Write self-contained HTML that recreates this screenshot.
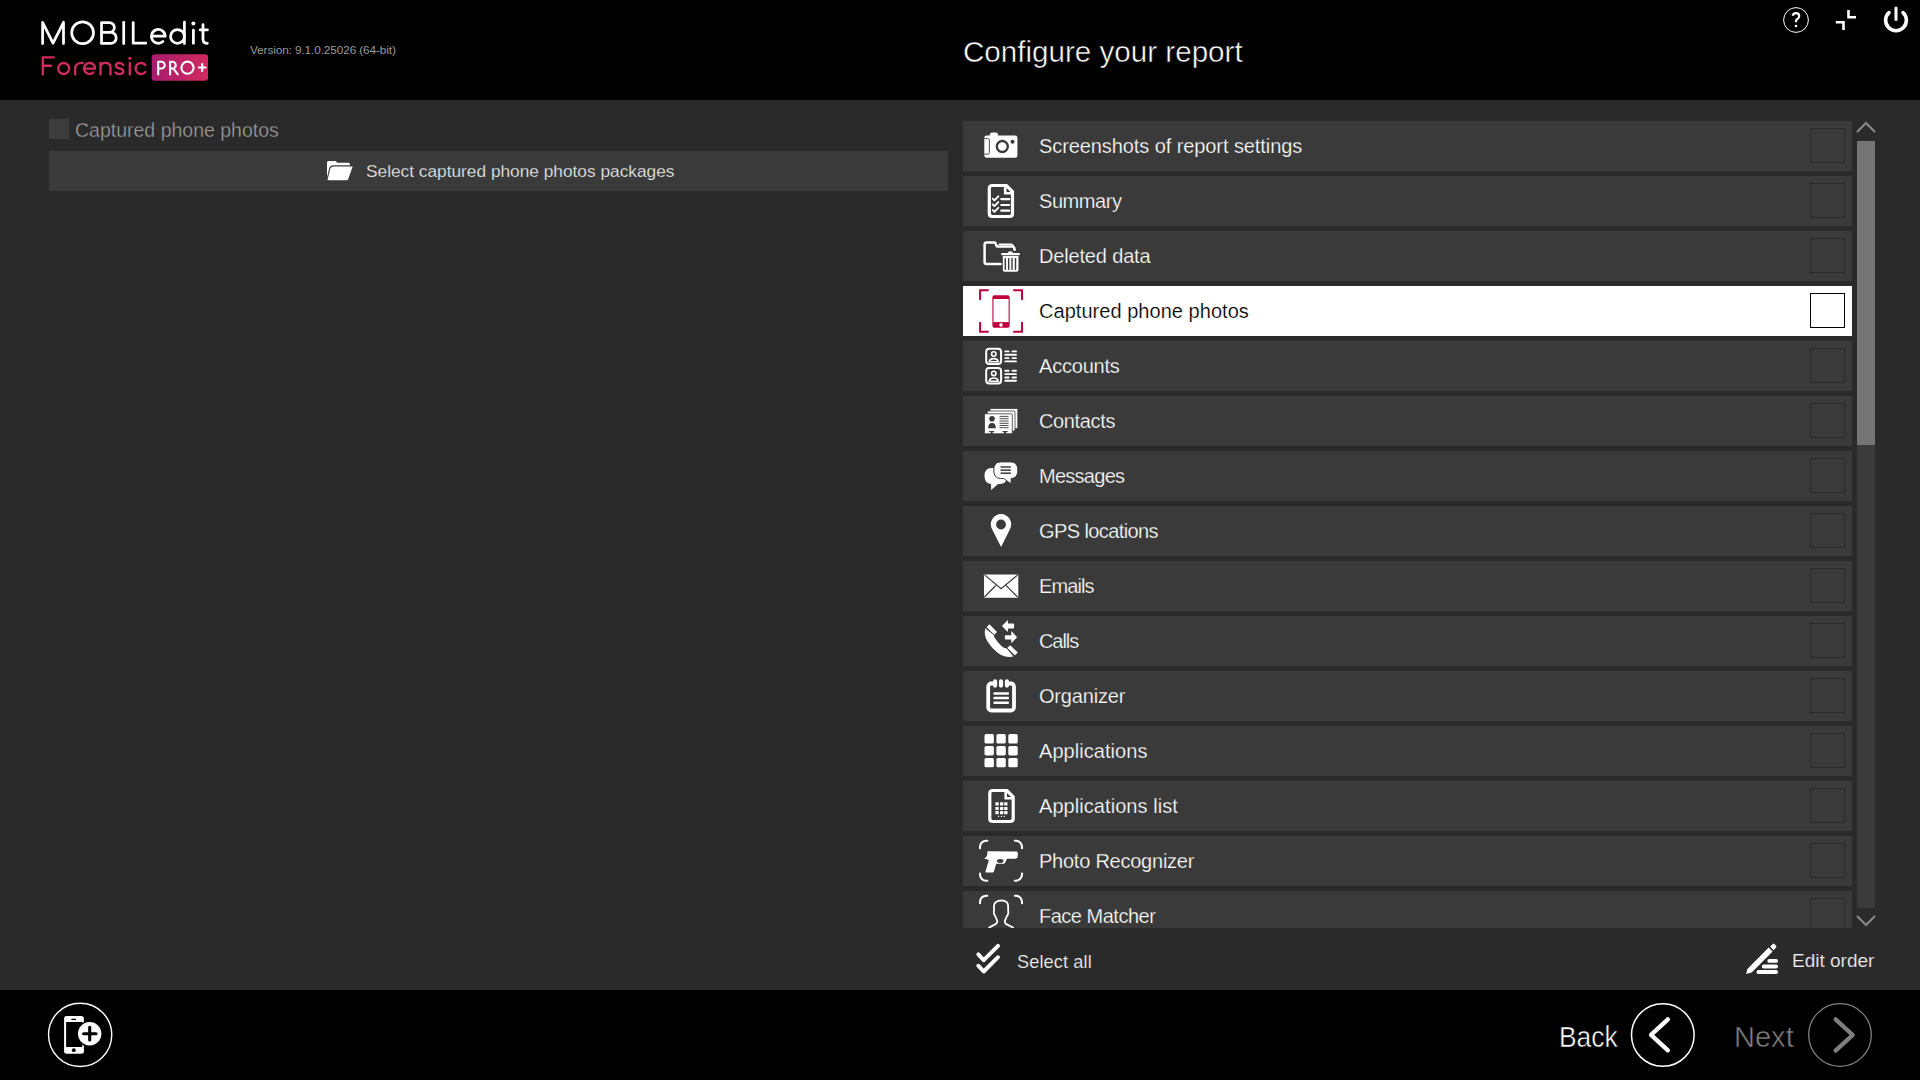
<!DOCTYPE html>
<html><head><meta charset="utf-8">
<style>
*{margin:0;padding:0;box-sizing:border-box}
html,body{width:1920px;height:1080px;overflow:hidden;background:#2a2a2a;font-family:"Liberation Sans",sans-serif;color:#fff}
.abs{position:absolute}
svg{position:absolute;overflow:visible}
#hdr{position:absolute;left:0;top:0;width:1920px;height:100px;background:#000}
#ftr{position:absolute;left:0;top:990px;width:1920px;height:90px;background:#000}
.t{position:absolute;white-space:nowrap;line-height:1}
.row{position:absolute;left:0;width:889px;height:50px;background:#3a3a3a}
.row .lbl{position:absolute;left:76px;top:15px;font-size:20px;line-height:1;color:#fff;white-space:nowrap;letter-spacing:-0.12px;-webkit-text-stroke:0.25px #3a3a3a}
.row .cb{position:absolute;left:847px;top:7px;width:35px;height:35px;border:1px solid #2a2a2a}
.row.sel{background:#fff}
.row.sel .lbl{color:#000;-webkit-text-stroke:0.2px #fff}
.row.sel .cb{border:1px solid #000}
.row svg{left:12px;top:0}
#list{position:absolute;left:963px;top:121px;width:889px;height:807px;overflow:hidden}
</style></head><body>
<div id="hdr"></div>
<div id="ftr"></div>

<!-- logo -->
<svg style="left:0;top:0" width="230" height="100" viewBox="0 0 230 100">
<defs><linearGradient id="bg" x1="0" x2="1" y1="0" y2="0"><stop offset="0" stop-color="#a81c70"/><stop offset="1" stop-color="#d02a5e"/></linearGradient></defs>
<g fill="none" stroke="#fff" stroke-width="2.75" stroke-linecap="round" stroke-linejoin="round">
<path d="M42.6 43.6 V22.3 L53 43.2 L63.5 22.3 V43.6"/>
<circle cx="82.6" cy="32.75" r="10.9"/>
<path d="M101.5 43.4 V22.5 H109.4 A4.95 4.95 0 0 1 109.4 32.4 H101.5 M109.4 32.4 H110.7 A5.5 5.5 0 0 1 110.7 43.4 H101.5"/>
<path d="M123.7 22.3 V43.5"/>
<path d="M133.2 22.5 V43.2 H145.8"/>
<path d="M151.6 36.2 H165.2 A6.9 6.9 0 1 0 162.9 41.5"/>
<circle cx="177.5" cy="36.4" r="6.9"/>
<path d="M184.4 22.2 V43.5"/>
<path d="M193.4 30.2 V43.3"/>
<path d="M203 24.5 V39.2 Q203 43.3 207.3 43.3 M200.1 29.8 H207.5"/>
</g>
<circle cx="193.4" cy="23.4" r="2" fill="#fff"/>
<g fill="none" stroke="#d02a63" stroke-width="2.35" stroke-linecap="round" stroke-linejoin="round">
<path d="M42.8 74.4 V57.4 H53.7 M42.8 65.7 H51"/>
<circle cx="63.65" cy="68.5" r="5.5"/>
<path d="M75.2 74.4 V68.5 Q75.2 62.9 82.6 62.9"/>
<path d="M84.05 68.6 H95.05 A5.5 5.5 0 1 0 93.4 72.4"/>
<path d="M100.5 74.4 V62.9 M100.5 67.6 Q100.5 62.9 105.5 62.9 Q110.5 62.9 110.5 67.6 V74.4"/>
<path d="M123.2 65 Q122 63 119.4 63 Q116 63 116 65.6 Q116 67.9 119.5 68.4 Q123.3 69 123.3 71.6 Q123.3 74.1 119.5 74.1 Q116.3 74.1 115.3 72.4"/>
<path d="M129.8 62.9 V74.4"/>
<path d="M145.4 65.1 A5.5 5.5 0 1 0 145.4 71.9"/>
</g>
<circle cx="129.9" cy="58.3" r="1.6" fill="#d02a63"/>
<rect x="151.7" y="54.3" width="56.3" height="26.5" rx="2.8" fill="url(#bg)"/>
<g fill="none" stroke="#fff" stroke-width="2.1" stroke-linecap="round" stroke-linejoin="round">
<path d="M158.2 74.4 V61.8 H161.4 A3.35 3.35 0 0 1 161.4 68.5 H158.2"/>
<path d="M170.1 74.4 V61.8 H172.4 A3.35 3.35 0 0 1 172.4 68.5 H170.1 M173.6 68.8 L177.8 74.4"/>
<circle cx="187.5" cy="67.7" r="6.1"/>
<path d="M198.9 67.5 H205.4 M202.15 64.1 V71" stroke-width="2.2"/>
</g>
</svg>
<div class="t" style="left:250px;top:45px;font-size:11.8px;color:#9a9a9a;letter-spacing:-0.105px">Version: 9.1.0.25026 (64-bit)</div>

<div class="t" style="left:963px;top:36.5px;font-size:29.6px;color:#fff;-webkit-text-stroke:0.5px #000">Configure your report</div>

<!-- header icons -->
<svg style="left:1770px;top:0" width="150" height="45" viewBox="1770 0 150 45">
<circle cx="1796" cy="20" r="12.4" fill="none" stroke="#fff" stroke-width="1"/>
<path d="M1792.7 15.8 Q1793.3 13.2 1796 13.2 Q1799.2 13.2 1799.2 16 Q1799.2 17.9 1797.4 19 Q1796 19.9 1796 21 V22.3" fill="none" stroke="#fff" stroke-width="2.2" stroke-linecap="butt"/>
<rect x="1794.9" y="24.9" width="2.2" height="2.2" fill="#fff"/>
<path d="M1848.5 10 V17.3 H1856 M1835.8 22.3 H1843.5 V30" fill="none" stroke="#fff" stroke-width="2.6"/>
<path d="M1889 12.6 A10.4 10.4 0 1 0 1903 12.6" fill="none" stroke="#fff" stroke-width="3.6" stroke-linecap="round"/>
<path d="M1896 8 V19.5" stroke="#fff" stroke-width="3" stroke-linecap="round"/>
</svg>

<!-- left panel -->
<div class="abs" style="left:49px;top:119px;width:20px;height:20px;background:#3c3c3c"></div>
<div class="t" style="left:75px;top:120.5px;font-size:19.5px;color:#a0a0a0;-webkit-text-stroke:0.35px #2a2a2a">Captured phone photos</div>
<div class="abs" style="left:49px;top:151px;width:899px;height:40px;background:#3a3a3a"></div>
<svg style="left:320px;top:155px" width="40" height="32" viewBox="0 0 40 32">
<path d="M7 25.8 L7 7.5 Q7 5.9 8.6 5.9 L15.7 5.9 L17.2 7.7 L28.7 7.7 Q29.6 7.8 30 9.8 L30 12 L10 12 L8 25.8 Z" fill="#fff"/>
<path d="M14 10.9 L33.4 10.9 L28.7 24.5 Q28.2 25.9 27 25.9 L8.3 25.9 Q6.8 25.9 7.1 24.3 L9.6 13.9 Q10.3 10.9 14 10.9 Z" fill="#fff" stroke="#3a3a3a" stroke-width="1.1"/>
</svg>
<div class="t" style="left:366px;top:163.3px;font-size:17.3px;color:#f0f0f0;-webkit-text-stroke:0.25px #3a3a3a">Select captured phone photos packages</div>

<div id="list">
<div class="row" style="top:0px"><svg width="50" height="50" viewBox="0 0 50 50"><path d="M9.3 17 Q9.3 14.6 11.7 14.6 L14.8 14.6 L14.8 13.8 Q15 11.6 17.2 11.6 L20.8 11.6 Q23 11.6 23.1 13.8 L23.1 14.6 L40 14.6 Q42.4 14.6 42.4 17 L42.4 34.4 Q42.4 36.8 40 36.8 L11.7 36.8 Q9.3 36.8 9.3 34.4 Z" fill="#fff"/>
<path d="M9.3 17.6 L12.6 17.6 Q14.4 17.6 14.4 19.4 L14.4 31.4 Q14.4 33.2 12.6 33.2 L9.3 33.2" fill="none" stroke="#3a3a3a" stroke-width="0.9"/>
<circle cx="27.3" cy="25.5" r="5.5" fill="none" stroke="#3a3a3a" stroke-width="2.3"/>
<circle cx="37.5" cy="20.8" r="2" fill="#3a3a3a"/></svg><div class="lbl" style="letter-spacing:-0.086px">Screenshots of report settings</div><div class="cb"></div></div>
<div class="row" style="top:55px"><svg width="50" height="50" viewBox="0 0 50 50"><path d="M14.3 12.5 Q14.3 9.5 17.3 9.5 L31.3 9.5 L37.5 15.7 L37.5 37.5 Q37.5 40.5 34.5 40.5 L17.3 40.5 Q14.3 40.5 14.3 37.5 Z" fill="none" stroke="#fff" stroke-width="3.2" stroke-linejoin="round"/>
<path d="M30.2 10 L30.2 17.3 L37 17.3" fill="none" stroke="#fff" stroke-width="2.6"/><path d="M17.8 22.7 L19.4 24.3 L23.3 20.3" fill="none" stroke="#fff" stroke-width="1.9" stroke-linecap="round" stroke-linejoin="round"/><path d="M26.3 23.2 H34.2" stroke="#fff" stroke-width="2.2" stroke-linecap="round"/><path d="M17.8 28.5 L19.4 30.1 L23.3 26.1" fill="none" stroke="#fff" stroke-width="1.9" stroke-linecap="round" stroke-linejoin="round"/><path d="M26.3 29.0 H34.2" stroke="#fff" stroke-width="2.2" stroke-linecap="round"/><path d="M17.8 34.2 L19.4 35.8 L23.3 31.8" fill="none" stroke="#fff" stroke-width="1.9" stroke-linecap="round" stroke-linejoin="round"/><path d="M26.3 34.7 H34.2" stroke="#fff" stroke-width="2.2" stroke-linecap="round"/></svg><div class="lbl" style="letter-spacing:-0.420px">Summary</div><div class="cb"></div></div>
<div class="row" style="top:110px"><svg width="50" height="50" viewBox="0 0 50 50"><path d="M25.5 32.9 L11.6 32.9 Q9.6 32.9 9.6 30.9 L9.6 13.6 Q9.6 11.6 11.6 11.6 L19.3 11.6 Q20.6 11.6 20.9 13 L21.3 14.3 Q21.7 15.6 23 15.6 L37.2 15.6 Q39 15.6 39.4 17.6 L39.6 18.8" fill="none" stroke="#fff" stroke-width="2.5" stroke-linecap="round"/>
<path d="M24.4 13.2 L36.3 13.2 Q37.9 13.3 38.2 15" fill="none" stroke="#fff" stroke-width="1.6" stroke-linecap="round"/>
<path d="M27.8 25 L43.5 25 L43.5 38.7 Q43.5 40.7 41.5 40.7 L29.8 40.7 Q27.8 40.7 27.8 38.7 Z" fill="#fff"/>
<path d="M27.3 23.1 L43.8 23.1" stroke="#fff" stroke-width="2.4" stroke-linecap="round"/>
<path d="M32.4 22.5 Q33 20.3 35.4 20.3 Q37.8 20.3 38.4 22.5 Z" fill="#fff"/>
<rect x="29.6" y="26.9" width="1.4" height="12" rx="0.6" fill="#3a3a3a"/><rect x="33.0" y="26.9" width="1.4" height="12" rx="0.6" fill="#3a3a3a"/><rect x="36.3" y="26.9" width="1.4" height="12" rx="0.6" fill="#3a3a3a"/><rect x="39.8" y="26.9" width="1.4" height="12" rx="0.6" fill="#3a3a3a"/></svg><div class="lbl" style="letter-spacing:-0.165px">Deleted data</div><div class="cb"></div></div>
<div class="row sel" style="top:165px"><svg width="50" height="50" viewBox="0 0 50 50"><g fill="none" stroke="#c0003c" stroke-width="2" stroke-linecap="round">
<path d="M5.1 13.2 V4.2 H12.9"/><path d="M39 4.2 H47 V13.2"/><path d="M5.1 36.8 V45.8 H12.9"/><path d="M39 45.8 H47 V36.8"/></g>
<rect x="17.4" y="9.3" width="17.3" height="32.4" rx="2" fill="#c0003c"/>
<rect x="18.5" y="13" width="15.1" height="23.1" fill="#fff"/>
<circle cx="26" cy="38.9" r="1.8" fill="#fff"/></svg><div class="lbl" style="letter-spacing:0.040px">Captured phone photos</div><div class="cb"></div></div>
<div class="row" style="top:220px"><svg width="50" height="50" viewBox="0 0 50 50"><rect x="11.2" y="7.7" width="14.9" height="15.4" rx="3" fill="none" stroke="#fff" stroke-width="2"/><circle cx="18.75" cy="13" r="2.2" fill="none" stroke="#fff" stroke-width="1.6"/><path d="M14.2 20.8 Q14.6 17.6 18.75 17.6 Q22.9 17.6 23.3 20.8 Z" fill="none" stroke="#fff" stroke-width="1.6" stroke-linejoin="round"/><path d="M30.299999999999997 10.4 H33.6" stroke="#fff" stroke-width="1.9" stroke-linecap="round"/><path d="M37.5 10.4 H41.0" stroke="#fff" stroke-width="1.9" stroke-linecap="round"/><path d="M30.299999999999997 13.7 H41.0" stroke="#fff" stroke-width="1.9" stroke-linecap="round"/><path d="M30.299999999999997 17.1 H33.6" stroke="#fff" stroke-width="1.9" stroke-linecap="round"/><path d="M37.5 17.1 H41.0" stroke="#fff" stroke-width="1.9" stroke-linecap="round"/><path d="M30.299999999999997 20.4 H41.0" stroke="#fff" stroke-width="1.9" stroke-linecap="round"/><rect x="11.2" y="27.099999999999998" width="14.9" height="15.4" rx="3" fill="none" stroke="#fff" stroke-width="2"/><circle cx="18.75" cy="32.4" r="2.2" fill="none" stroke="#fff" stroke-width="1.6"/><path d="M14.2 40.2 Q14.6 37.0 18.75 37.0 Q22.9 37.0 23.3 40.2 Z" fill="none" stroke="#fff" stroke-width="1.6" stroke-linejoin="round"/><path d="M30.299999999999997 29.799999999999997 H33.6" stroke="#fff" stroke-width="1.9" stroke-linecap="round"/><path d="M37.5 29.799999999999997 H41.0" stroke="#fff" stroke-width="1.9" stroke-linecap="round"/><path d="M30.299999999999997 33.099999999999994 H41.0" stroke="#fff" stroke-width="1.9" stroke-linecap="round"/><path d="M30.299999999999997 36.5 H33.6" stroke="#fff" stroke-width="1.9" stroke-linecap="round"/><path d="M37.5 36.5 H41.0" stroke="#fff" stroke-width="1.9" stroke-linecap="round"/><path d="M30.299999999999997 39.8 H41.0" stroke="#fff" stroke-width="1.9" stroke-linecap="round"/></svg><div class="lbl" style="letter-spacing:-0.206px">Accounts</div><div class="cb"></div></div>
<div class="row" style="top:275px"><svg width="50" height="50" viewBox="0 0 50 50"><rect x="15" y="12.5" width="27.8" height="19.9" rx="1" fill="#fff" stroke="#3a3a3a" stroke-width="0.8"/>
<rect x="12.3" y="15" width="27.7" height="20" rx="1" fill="#fff" stroke="#3a3a3a" stroke-width="0.8"/>
<rect x="9.5" y="17.8" width="27.8" height="19.9" rx="1" fill="#fff" stroke="#3a3a3a" stroke-width="0.8"/>
<circle cx="17" cy="22.7" r="2.8" fill="#3a3a3a"/>
<path d="M13.2 32.2 Q13.2 27.1 17 27.1 Q20.8 27.1 20.8 32.2 Z" fill="#3a3a3a"/>
<path d="M24.5 20.4 H33.6" stroke="#3a3a3a" stroke-width="0.9"/><path d="M24.5 22.7 H33.6" stroke="#3a3a3a" stroke-width="0.9"/><path d="M24.5 25 H33.6" stroke="#3a3a3a" stroke-width="0.9"/><path d="M24.5 27.3 H33.6" stroke="#3a3a3a" stroke-width="0.9"/><path d="M24.5 29.5 H33.6" stroke="#3a3a3a" stroke-width="0.9"/><path d="M24.5 31.7 H33.6" stroke="#3a3a3a" stroke-width="0.9"/>
<path d="M14.7 35.6 H18.7" stroke="#3a3a3a" stroke-width="1.3" stroke-linecap="round"/><path d="M16.7 35.6 V38.2" stroke="#3a3a3a" stroke-width="1.7"/>
<path d="M28.1 35.6 H32.1" stroke="#3a3a3a" stroke-width="1.3" stroke-linecap="round"/><path d="M30.1 35.6 V38.2" stroke="#3a3a3a" stroke-width="1.7"/></svg><div class="lbl" style="letter-spacing:-0.363px">Contacts</div><div class="cb"></div></div>
<div class="row" style="top:330px"><svg width="50" height="50" viewBox="0 0 50 50"><path d="M16.5 16.9 L25 16.9 Q32 16.9 32 25 Q32 33.1 25 33.1 L23.1 33.1 L16.2 38.9 L16 33.1 Q9.5 32.5 9.5 25 Q9.5 16.9 16.5 16.9 Z" fill="#fff"/>
<path d="M25.7 10.9 L35.8 10.9 Q42.8 10.9 42.8 19.2 Q42.8 27.4 36.1 27.5 L36.1 32.9 L28.7 27.5 L25.7 27.5 Q18.75 27.5 18.75 19.2 Q18.75 10.9 25.7 10.9 Z" fill="#fff" stroke="#3a3a3a" stroke-width="1"/>
<path d="M25.5 16 H35.9" stroke="#3a3a3a" stroke-width="1.5"/><path d="M25.5 19.1 H35.9" stroke="#3a3a3a" stroke-width="1.5"/><path d="M25.5 22.2 H35.9" stroke="#3a3a3a" stroke-width="1.5"/></svg><div class="lbl" style="letter-spacing:-0.734px">Messages</div><div class="cb"></div></div>
<div class="row" style="top:385px"><svg width="50" height="50" viewBox="0 0 50 50"><path d="M17.1 23.3 A10.2 10.2 0 1 1 34.9 23.3 L26.1 41 Z" fill="#fff"/><circle cx="26" cy="18.5" r="4.9" fill="#3a3a3a"/></svg><div class="lbl" style="letter-spacing:-0.595px">GPS locations</div><div class="cb"></div></div>
<div class="row" style="top:440px"><svg width="50" height="50" viewBox="0 0 50 50"><rect x="9" y="13.4" width="34.3" height="23.4" rx="0.8" fill="#fff"/>
<path d="M9.6 13.9 L26.1 27.6 L42.7 13.9 M9.4 36 L20.8 24.5 M31 24.4 L42.6 36" fill="none" stroke="#3a3a3a" stroke-width="1.2"/></svg><div class="lbl" style="letter-spacing:-0.880px">Emails</div><div class="cb"></div></div>
<div class="row" style="top:495px"><svg width="50" height="50" viewBox="0 0 50 50"><path d="M10.3 12.2 Q8.6 19 12.5 25.5 Q16.5 32 23 37 Q30 42 38.4 40.6 L31.8 32.4 Q29.5 32.4 27 30.4 Q22 26 19.2 21 Q18.6 19.8 19 19.3 Z" fill="#fff"/>
<path d="M14.4 8.3 L22 16 L19.2 19 L11.6 11.3 Z" fill="#fff"/>
<path d="M35.2 29.2 L42.8 36.6 L39.8 39.6 L32.2 31.9 Z" fill="#fff"/>
<path d="M11.6 11.6 L19.4 19.4 M32 32 L39.5 39.4" stroke="#3a3a3a" stroke-width="0.8"/>
<path d="M26.9 10 L32.9 3.9 L32.9 7.6 L38.3 7.6 Q39.1 7.6 39.1 8.4 L39.1 11.7 Q39.1 12.5 38.3 12.5 L32.9 12.5 L32.9 16 Z" fill="#fff"/>
<path d="M42.1 21.3 L36.3 15 L36.3 19.2 L30.7 19.2 Q29.9 19.2 29.9 20 L29.9 22.8 Q29.9 23.6 30.7 23.6 L36.3 23.6 L36.3 27.3 Z" fill="#fff"/></svg><div class="lbl" style="letter-spacing:-1.070px">Calls</div><div class="cb"></div></div>
<div class="row" style="top:550px"><svg width="50" height="50" viewBox="0 0 50 50"><rect x="13.2" y="12.5" width="25.8" height="27" rx="3.2" fill="none" stroke="#fff" stroke-width="3.8"/>
<path d="M20.1 10.4 V14.6" stroke="#fff" stroke-width="4.2" stroke-linecap="round"/><path d="M26 10.4 V14.6" stroke="#fff" stroke-width="4.2" stroke-linecap="round"/><path d="M31.9 10.4 V14.6" stroke="#fff" stroke-width="4.2" stroke-linecap="round"/><rect x="22.25" y="9" width="1.75" height="6.2" fill="#3a3a3a"/><rect x="28.1" y="9" width="1.75" height="6.2" fill="#3a3a3a"/><path d="M19.5 22.5 H32.8" stroke="#fff" stroke-width="2.5" stroke-linecap="round"/><path d="M19.5 27.1 H32.8" stroke="#fff" stroke-width="2.5" stroke-linecap="round"/><path d="M19.5 31.7 H32.8" stroke="#fff" stroke-width="2.5" stroke-linecap="round"/></svg><div class="lbl" style="letter-spacing:-0.182px">Organizer</div><div class="cb"></div></div>
<div class="row" style="top:605px"><svg width="50" height="50" viewBox="0 0 50 50"><rect x="9.5" y="8.1" width="9.4" height="9.4" rx="1.6" fill="#fff"/><rect x="9.5" y="20" width="9.4" height="9.4" rx="1.6" fill="#fff"/><rect x="9.5" y="31.9" width="9.4" height="9.4" rx="1.6" fill="#fff"/><rect x="21.4" y="8.1" width="9.4" height="9.4" rx="1.6" fill="#fff"/><rect x="21.4" y="20" width="9.4" height="9.4" rx="1.6" fill="#fff"/><rect x="21.4" y="31.9" width="9.4" height="9.4" rx="1.6" fill="#fff"/><rect x="33.3" y="8.1" width="9.4" height="9.4" rx="1.6" fill="#fff"/><rect x="33.3" y="20" width="9.4" height="9.4" rx="1.6" fill="#fff"/><rect x="33.3" y="31.9" width="9.4" height="9.4" rx="1.6" fill="#fff"/></svg><div class="lbl" style="letter-spacing:0.053px">Applications</div><div class="cb"></div></div>
<div class="row" style="top:660px"><svg width="50" height="50" viewBox="0 0 50 50"><path d="M14.8 12.5 Q14.8 9.5 17.8 9.5 L31.8 9.5 L38.2 15.8 L38.2 37.5 Q38.2 40.5 35.2 40.5 L17.8 40.5 Q14.8 40.5 14.8 37.5 Z" fill="none" stroke="#fff" stroke-width="3.2" stroke-linejoin="round"/>
<path d="M30.7 10 L30.7 17.3 L37.6 17.3" fill="none" stroke="#fff" stroke-width="2.6"/><rect x="20.4" y="21.3" width="3.3" height="3.1" rx="0.5" fill="#fff"/><rect x="20.4" y="25.9" width="3.3" height="3.1" rx="0.5" fill="#fff"/><rect x="20.4" y="30.1" width="3.3" height="3.1" rx="0.5" fill="#fff"/><rect x="25" y="21.3" width="3.3" height="3.1" rx="0.5" fill="#fff"/><rect x="25" y="25.9" width="3.3" height="3.1" rx="0.5" fill="#fff"/><rect x="25" y="30.1" width="3.3" height="3.1" rx="0.5" fill="#fff"/><rect x="29.2" y="21.3" width="3.3" height="3.1" rx="0.5" fill="#fff"/><rect x="29.2" y="25.9" width="3.3" height="3.1" rx="0.5" fill="#fff"/><rect x="29.2" y="30.1" width="3.3" height="3.1" rx="0.5" fill="#fff"/><circle cx="23.6" cy="35.4" r="0.65" fill="#fff"/><circle cx="26.4" cy="35.4" r="0.65" fill="#fff"/><circle cx="29.2" cy="35.4" r="0.65" fill="#fff"/></svg><div class="lbl" style="letter-spacing:0.061px">Applications list</div><div class="cb"></div></div>
<div class="row" style="top:715px"><svg width="50" height="50" viewBox="0 0 50 50"><g fill="none" stroke="#fff" stroke-width="2.1" stroke-linecap="round">
<path d="M5 12.3 V11 A6.2 6.2 0 0 1 11.2 4.7 H12.3"/><path d="M39.9 4.7 H41 A6.2 6.2 0 0 1 47 11 V12.3"/>
<path d="M5 37.6 V38.5 A6.2 6.2 0 0 0 11.2 44.7 H12.3"/><path d="M39.9 44.7 H41 A6.2 6.2 0 0 0 47 38.5 V37.6"/></g><path d="M12.6 15.3 L14.2 15.3 Q15 15.1 16.5 15.2 L41.5 15.5 Q42.8 15.6 42.8 17.2 L42.8 20.3 Q42.6 22.6 40.3 22.7 L32 22.7 L30.1 26.8 Q29.6 27.7 28.5 27.7 L21.3 27.8 L18.8 35.8 Q18.5 36.6 17.7 36.6 L11.2 36.6 Q10.2 36.5 10.5 35.4 L13.8 24.2 Q12.2 23 9.3 22.7 Q11.4 21.2 12 19.6 L12.4 18.2 Q11.8 17.5 12.6 15.3 Z" fill="#fff"/>
<ellipse cx="25.2" cy="25" rx="3.3" ry="1.9" fill="#3a3a3a"/></svg><div class="lbl" style="letter-spacing:-0.240px">Photo Recognizer</div><div class="cb"></div></div>
<div class="row" style="top:770px"><svg width="50" height="50" viewBox="0 0 50 50"><g fill="none" stroke="#fff" stroke-width="2.1" stroke-linecap="round"><path d="M5 12.3 V11 A6.2 6.2 0 0 1 11.2 4.7 H12.3"/><path d="M39.9 4.7 H41 A6.2 6.2 0 0 1 47 11 V12.3"/></g><path d="M14.1 36.6 L21 32.9 Q22.5 31.5 22.2 29.6 L19.9 24.5 Q18.5 22.5 18.9 21 Q19.2 20 19 19.5 L19 14.5 Q19.5 9.8 26.6 9.3 Q32.8 9.8 33.1 14.5 L33.2 19.5 Q33.1 20.3 33.3 21 Q33.5 23 32 25 L29.9 29.6 Q29.6 31.5 30.8 32.9 L38 36.6" fill="none" stroke="#fff" stroke-width="1.8" stroke-linejoin="round" stroke-linecap="round"/></svg><div class="lbl" style="letter-spacing:-0.493px">Face Matcher</div><div class="cb"></div></div>

</div>

<!-- scrollbar -->
<div class="abs" style="left:1857px;top:141px;width:18px;height:767px;background:#3a3a3a"></div>
<div class="abs" style="left:1857px;top:141px;width:18px;height:304px;background:#747474"></div>
<svg style="left:1850px;top:115px" width="35" height="820" viewBox="1850 115 35 820">
<path d="M1857.5 131.5 L1866 123 L1874.5 131.5" fill="none" stroke="#8a8a8a" stroke-width="2" stroke-linecap="round"/>
<path d="M1857.5 916.5 L1866 925 L1874.5 916.5" fill="none" stroke="#8a8a8a" stroke-width="2" stroke-linecap="round"/>
</svg>

<!-- select all / edit order -->
<svg style="left:970px;top:940px" width="40" height="40" viewBox="970 940 40 40">
<path d="M978.3 954.4 L983.7 960.2 L998 945.9 M978.3 965.7 L983.7 971.5 L998 957.2" fill="none" stroke="#fff" stroke-width="3.9" stroke-linecap="round" stroke-linejoin="round"/>
</svg>
<div class="t" style="left:1017px;top:952.5px;font-size:18.2px;color:#f2f2f2;letter-spacing:0.1px;-webkit-text-stroke:0.2px #2a2a2a">Select all</div>
<svg style="left:1740px;top:940px" width="45" height="40" viewBox="0 0 45 40">
<path d="M6.1 33.9 L7.4 28.9 L28.7 7.6 L32.6 11.5 L11.7 32.6 Z" fill="#fff"/>
<path d="M30.2 6.5 L32.8 3.9 Q33.6 3.3 34.4 4 L36.1 5.7 Q36.8 6.6 36.1 7.4 L33.5 10.2 Z" fill="#fff"/>
<path d="M29.3 20.9 H36.1 M23.8 26.5 H36.1 M18.4 32 H36.1" stroke="#fff" stroke-width="3.9" stroke-linecap="round"/>
</svg>
<div class="t" style="left:1792px;top:951px;font-size:19px;color:#f2f2f2;-webkit-text-stroke:0.2px #2a2a2a">Edit order</div>

<!-- footer -->
<svg style="left:45px;top:1000px" width="70" height="70" viewBox="0 0 70 70">
<circle cx="35.15" cy="34.85" r="31.6" fill="none" stroke="#fff" stroke-width="1.4"/>
<rect x="19.1" y="15.9" width="19.8" height="37.9" rx="2.5" fill="#fff"/>
<rect x="21.1" y="22" width="16.2" height="25" fill="#000"/>
<path d="M26.8 19.3 H30.5" stroke="#000" stroke-width="1.2" stroke-linecap="round"/>
<circle cx="28.8" cy="50.2" r="1.9" fill="#000"/>
<circle cx="44.7" cy="33.7" r="13.2" fill="#000"/>
<circle cx="44.7" cy="33.7" r="11.7" fill="#fff"/>
<path d="M38.6 33.7 H51 M44.7 27.2 V40" stroke="#000" stroke-width="3.1" stroke-linecap="round"/>
</svg>

<div class="t" style="left:1559px;top:1021.6px;font-size:30px;color:#fff;-webkit-text-stroke:0.5px #000;transform:scaleX(0.88);transform-origin:0 0">Back</div>
<div class="t" style="left:1734px;top:1021.6px;font-size:30px;color:#7f7f7f;-webkit-text-stroke:0.5px #000;transform:scaleX(0.968);transform-origin:0 0">Next</div>
<svg style="left:1620px;top:995px" width="300" height="85" viewBox="1620 995 300 85">
<circle cx="1662.8" cy="1035" r="31.3" fill="none" stroke="#fff" stroke-width="1.5"/>
<path d="M1667.9 1019.4 L1651 1034.9 L1667.9 1050.4" fill="none" stroke="#fff" stroke-width="4.3" stroke-linecap="round" stroke-linejoin="round"/>
<circle cx="1840" cy="1035" r="31.3" fill="none" stroke="#7f7f7f" stroke-width="1.3"/>
<path d="M1835.6 1019.4 L1852.7 1035 L1835.6 1050.6" fill="none" stroke="#7f7f7f" stroke-width="4.3" stroke-linecap="round" stroke-linejoin="round"/>
</svg>
</body></html>
